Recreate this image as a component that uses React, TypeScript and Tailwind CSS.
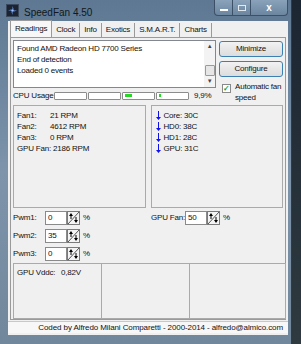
import React from 'react';

const FONT = { fontFamily: '"Liberation Sans", Arial, sans-serif' };

function Spin() {
  return (
    <svg width="13" height="14" viewBox="0 0 13 14" className="block">
      <rect x="0.5" y="0.5" width="12" height="13" fill="#f4f4f4" stroke="#7a7a7a" />
      <line x1="1" y1="13" x2="12" y2="1" stroke="#555" strokeWidth="1" />
      <path d="M4 2 L2 5 H3.5 V8 H4.5 V5 H6 Z" fill="#000" />
      <path d="M9 12 L7 9 H8.5 V6 H9.5 V9 H11 Z" fill="#000" />
    </svg>
  );
}

function PwmRow({ label, value }: { label: string; value: string }) {
  return (
    <div className="flex items-center h-[14px]">
      <span className="w-[32px]">{label}</span>
      <div className="w-[22px] h-[14px] bg-white border border-[#8a8a8a] pl-[2px] leading-[12px]">{value}</div>
      <Spin />
      <span className="ml-[3px]">%</span>
    </div>
  );
}

function Arrow() {
  return (
    <svg width="5" height="9" viewBox="0 0 5 9" className="block">
      <path d="M2 0 H3 V6 H5 L2.5 9 L0 6 H2 Z" fill="#1010ee" />
    </svg>
  );
}

function CpuBar({ fill }: { fill?: number }) {
  return (
    <div className="w-[33px] h-[8px] bg-white border border-[#8c8c8c] rounded-[1px] flex items-center px-[2px]">
      {fill ? <div className="h-[3px] bg-[#27d827]" style={{ width: fill }} /> : null}
    </div>
  );
}

export default function App() {
  const tabs = ['Clock', 'Info', 'Exotics', 'S.M.A.R.T.', 'Charts'];
  return (
    <div
      className="w-[301px] h-[344px] flex bg-gradient-to-b from-[#1c2633] to-[#2e3a3f] overflow-hidden text-[8px] tracking-[-0.2px] whitespace-nowrap text-[#111]"
      style={FONT}
    >
      <div className="w-[292px] h-[344px] flex flex-col bg-gradient-to-b from-[#5e7893] via-[#7d94ab] to-[#71879b] border-r border-[#2d3c4c]">
        {/* title bar */}
        <div className="h-[21px] flex items-start shrink-0">
          <div className="mt-[4px] ml-[6px] w-[13px] h-[13px] bg-[#1b2430] border border-[#3a4a5c] grid place-items-center">
            <svg width="11" height="11" viewBox="0 0 11 11">
              <circle cx="5.5" cy="5.5" r="1.3" fill="#9fc4ff" />
              <path d="M5.5 1 L6.5 4 L5.5 4.5 Z M10 5.5 L7 6.5 L6.5 5.5 Z M5.5 10 L4.5 7 L5.5 6.5 Z M1 5.5 L4 4.5 L4.5 5.5 Z" fill="#6aa0ff" />
            </svg>
          </div>
          <span className="ml-[5px] mt-[5px] text-[10px] tracking-normal text-[#101820]">SpeedFan 4.50</span>
          <div className="flex-1" />
          <div className="flex h-[16px] mr-[3px] border border-t-0 border-[#3c5068] rounded-b-[4px] overflow-hidden bg-gradient-to-b from-[#8aa3bb] to-[#6c86a0]">
            <div className="w-[18px] border-r border-[#3c5068] grid place-items-center">
              <div className="w-[8px] h-[2px] bg-white mt-[4px]" />
            </div>
            <div className="w-[18px] border-r border-[#3c5068] grid place-items-center">
              <div className="w-[8px] h-[6px] border border-white/80" />
            </div>
            <div className="w-[36px] grid place-items-center text-white text-[10px] font-bold leading-none">x</div>
          </div>
        </div>
        {/* client */}
        <div className="ml-[8px] mr-[3px] flex-1 bg-[#f0f0f0] flex flex-col">
          {/* tabs */}
          <div className="h-[16px] flex items-end pl-[2px] shrink-0">
            <div className="h-[17px] px-[4px] bg-[#f7f7f7] border border-b-0 border-[#9a9a9a] leading-[15px] relative z-10">Readings</div>
            {tabs.map((t) => (
              <div key={t} className="h-[14px] px-[4px] border-r border-[#9a9a9a] leading-[13px]">{t}</div>
            ))}
          </div>
          {/* tab page */}
          <div className="mx-[2px] h-[283px] border border-[#9a9a9a] bg-[#f0f0f0] pl-[2px] pr-[2px] pt-[2px] flex flex-col shrink-0">
            <div className="flex">
              <div className="flex flex-col">
                <div className="w-[203px] h-[48px] bg-white border border-[#828790] flex">
                  <div className="flex-1 pl-[3px] pt-[2px] leading-[11px]">
                    <div>Found AMD Radeon HD 7700 Series</div>
                    <div>End of detection</div>
                    <div>Loaded 0 events</div>
                  </div>
                  <div className="w-[11px] bg-[#f3f3f3] flex flex-col items-center">
                    <div className="h-[11px] text-[6px] leading-[11px] text-[#444]">▲</div>
                    <div className="flex-1" />
                    <div className="w-[10px] h-[11px] bg-[#e6e6e6] border border-[#9a9a9a] rounded-[1px]" />
                    <div className="h-[11px] text-[6px] leading-[11px] text-[#444]">▼</div>
                  </div>
                </div>
                <div className="flex items-center mt-[3px] h-[9px]">
                  <span className="w-[41px]">CPU Usage</span>
                  <div className="flex gap-[1px]">
                    <CpuBar />
                    <CpuBar />
                    <CpuBar fill={7} />
                    <CpuBar fill={2} />
                  </div>
                  <span className="ml-[5px]">9,9%</span>
                </div>
              </div>
              <div className="flex flex-col ml-[3px] w-[67px] pt-[1px]">
                <div className="h-[16px] border border-[#3c7fb1] rounded-[3px] bg-gradient-to-b from-[#f2f2f2] to-[#dcdcdc] grid place-items-center">Minimize</div>
                <div className="h-[16px] mt-[4px] border border-[#3c7fb1] rounded-[3px] bg-gradient-to-b from-[#f2f2f2] to-[#dcdcdc] grid place-items-center">Configure</div>
                <div className="flex mt-[4px] pl-[3px]">
                  <div className="w-[9px] h-[9px] mt-[3px] bg-white border border-[#8a8a8a] grid place-items-center text-[#1f9e1f] text-[8px] leading-none font-bold">✓</div>
                  <div className="ml-[4px] leading-[11px]">Automatic fan<br />speed</div>
                </div>
              </div>
            </div>
            {/* panels */}
            <div className="flex mt-[2px] h-[104px]">
              <div className="w-[134px] border border-[#aaaaaa] pl-[3px] pt-[4px] leading-[11px]">
                {[
                  ['Fan1:', '21 RPM'],
                  ['Fan2:', '4612 RPM'],
                  ['Fan3:', '0 RPM'],
                ].map(([a, b]) => (
                  <div key={a} className="flex"><span className="w-[33px]">{a}</span><span>{b}</span></div>
                ))}
                <div>GPU Fan: 2186 RPM</div>
              </div>
              <div className="w-[134px] ml-[5px] border border-[#aaaaaa] pl-[4px] pt-[4px] leading-[11px]">
                {['Core: 30C', 'HD0: 38C', 'HD1: 28C', 'GPU: 31C'].map((t) => (
                  <div key={t} className="flex items-center h-[11px]"><Arrow /><span className="ml-[3px]">{t}</span></div>
                ))}
              </div>
            </div>
            {/* pwm */}
            <div className="flex mt-[3px]">
              <div className="flex flex-col gap-[4px] w-[138px]">
                <PwmRow label="Pwm1:" value="0" />
                <PwmRow label="Pwm2:" value="35" />
                <PwmRow label="Pwm3:" value="0" />
              </div>
              <div className="flex items-start">
                <div className="flex items-center h-[14px]">
                  <span className="w-[34px]">GPU Fan:</span>
                  <div className="w-[22px] h-[14px] bg-white border border-[#8a8a8a] pl-[2px] leading-[12px]">50</div>
                  <Spin />
                  <span className="ml-[3px]">%</span>
                </div>
              </div>
            </div>
            {/* bottom panel */}
            <div className="flex mt-[2px] w-[273px] h-[57px] border border-[#aaaaaa]">
              <div className="w-[88px] border-r border-[#aaaaaa] pl-[3px] pt-[3px] flex">
                <span className="w-[44px]">GPU Vddc:</span>
                <span>0,82V</span>
              </div>
              <div className="w-[88px] border-r border-[#aaaaaa]" />
              <div className="flex-1" />
            </div>
          </div>
          {/* status bar */}
          <div className="mt-[1px] h-[12px] bg-[#f7f7f7] border-t border-[#c8c8c8] flex items-center justify-end pr-[5px] tracking-[-0.1px]">
            Coded by Alfredo Milani Comparetti - 2000-2014 - alfredo@almico.com
          </div>
        </div>
        <div className="h-[9px] shrink-0" />
      </div>
    </div>
  );
}
